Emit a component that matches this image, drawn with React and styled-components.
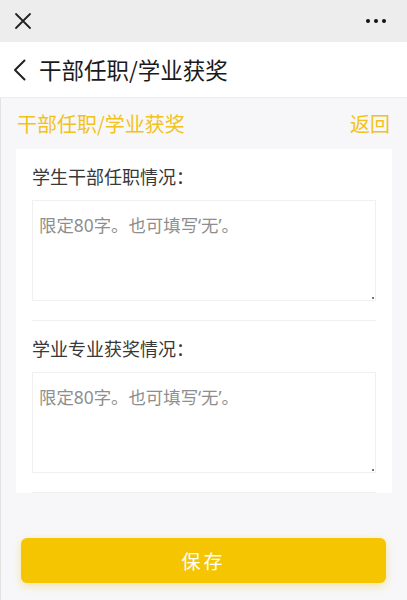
import React from 'react'
import styled, { createGlobalStyle } from 'styled-components'

const Global = createGlobalStyle`
body {
  margin: 0;
  font-family: "Noto Sans CJK SC", "Noto Sans", sans-serif;
  background: #f7f7f9;
}
`

const Page = styled.div`
min-height: 600px;
display: flex;
flex-direction: column;
background: #f7f7f9;
`

const TopBar = styled.div`
height: 42px;
background: #ededed;
display: flex;
align-items: center;
justify-content: space-between;
padding: 0 20px 0 14px;
`

const TitleBar = styled.div`
height: 56px;
background: #fff;
display: flex;
align-items: center;
padding-left: 13px;
border-bottom: 1px solid #ececec;
box-sizing: border-box;
`

const Title = styled.h1`
margin: 0 0 0 12px;
font-size: 22.5px;
font-weight: 400;
color: #1a1a1a;
line-height: 1;
`

const Body = styled.div`
flex: 1;
display: flex;
flex-direction: column;
border-left: 1px solid #e2e2e2;
`

const HeadRow = styled.div`
height: 51px;
display: flex;
align-items: center;
justify-content: space-between;
padding: 0 17px 0 16px;
color: #f2c21c;
font-size: 20px;
`

const Back = styled.span`
cursor: pointer;
`

const Card = styled.div`
margin: 0 15px 0 15px;
background: #fff;
padding: 0 16px;
`

const Section = styled.div`
padding: 13px 0 19px;
border-bottom: 1px solid #efefef;
`

const Label = styled.div`
font-size: 18px;
line-height: 28px;
color: #383838;
margin-bottom: 10px;
`

const AreaBox = styled.div`
position: relative;
&::after {
  content: "";
  position: absolute;
  right: 2px;
  bottom: 2px;
  width: 2px;
  height: 2px;
  background: #777;
}
`

const Area = styled.textarea`
display: block;
width: 100%;
height: 101px;
box-sizing: border-box;
border: 1px solid #f0f0f0;
border-radius: 0;
padding: 11px 6px;
font-family: "Noto Sans", "Noto Sans CJK SC", sans-serif;
font-size: 17.4px;
line-height: 26px;
color: #333;
resize: none;
outline: none;
&::placeholder {
  color: #8e8e8e;
}
`

const Footer = styled.div`
padding: 45px 21px 18px 20px;
`

const SaveButton = styled.button`
width: 100%;
height: 45px;
border: none;
border-radius: 6px;
background: #f5c502;
color: #fff;
font-family: inherit;
font-size: 19px;
letter-spacing: 3px;
box-shadow: 0 3px 9px rgba(240, 190, 0, 0.35);
`

const fields = ['学生干部任职情况：', '学业专业获奖情况：']

export default function App() {
  return (
    <Page>
      <Global />
      <TopBar>
        <svg width="18" height="18" viewBox="0 0 18 18">
          <path d="M2 2 L16 16 M16 2 L2 16" stroke="#222" strokeWidth="1.8" strokeLinecap="round" />
        </svg>
        <svg width="22" height="6" viewBox="0 0 22 6">
          <circle cx="3" cy="3" r="2" fill="#111" />
          <circle cx="11" cy="3" r="2" fill="#111" />
          <circle cx="19" cy="3" r="2" fill="#111" />
        </svg>
      </TopBar>
      <TitleBar>
        <svg width="14" height="22" viewBox="0 0 14 22">
          <path d="M11.5 1.5 L2 11 L11.5 20.5" stroke="#222" strokeWidth="2" fill="none" strokeLinecap="round" strokeLinejoin="round" />
        </svg>
        <Title>干部任职/学业获奖</Title>
      </TitleBar>
      <Body>
        <HeadRow>
          <span>干部任职/学业获奖</span>
          <Back>返回</Back>
        </HeadRow>
        <Card>
          {fields.map((f) => (
            <Section key={f}>
              <Label>{f}</Label>
              <AreaBox>
                <Area placeholder="限定80字。也可填写‘无’。" />
              </AreaBox>
            </Section>
          ))}
        </Card>
        <Footer>
          <SaveButton>保存</SaveButton>
        </Footer>
      </Body>
    </Page>
  )
}
